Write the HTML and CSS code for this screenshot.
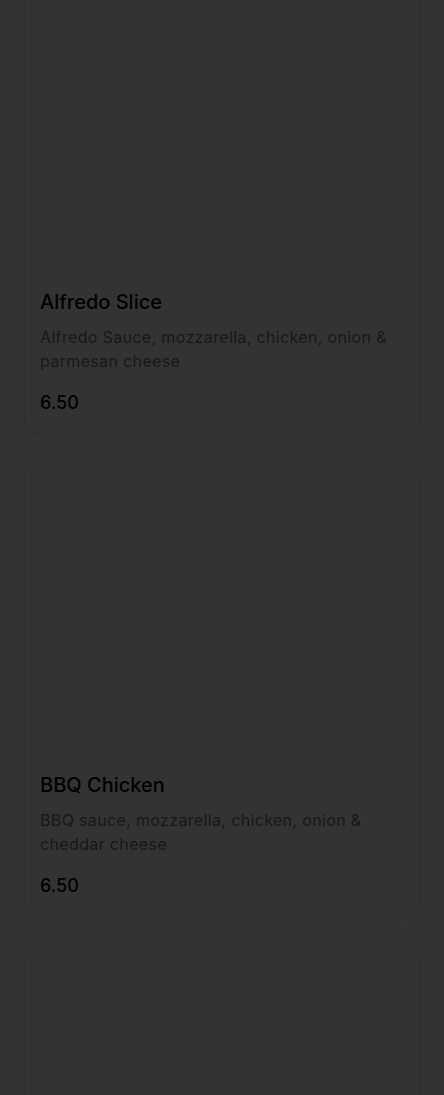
FILE: index.html
```html
<!DOCTYPE html>
<html lang="en">
  <head>
    <meta charset="UTF-8" />
    <meta name="viewport" content="width=device-width, initial-scale=1.0" />
    <title>Menu</title>
    <link rel="stylesheet" href="styles.css">
  </head>
  <body>
    <div class="menu">
      <div class="item-card">
        <div class="item-image"></div>
        <div class="item-info">
          <h3 class="item-name">Alfredo Slice</h3>
          <p class="item-desc">Alfredo Sauce, mozzarella, chicken, onion &amp; parmesan cheese</p>
          <span class="item-price">6.50</span>
        </div>
      </div>
      <div class="item-card">
        <div class="item-image"></div>
        <div class="item-info">
          <h3 class="item-name">BBQ Chicken</h3>
          <p class="item-desc">BBQ sauce, mozzarella, chicken, onion &amp; cheddar cheese</p>
          <span class="item-price">6.50</span>
        </div>
      </div>
      <div class="item-card">
        <div class="item-image"></div>
        <div class="item-info">
          <h3 class="item-name">Buffalo Chicken</h3>
          <p class="item-desc">Buffalo sauce, mozzarella, chicken &amp; ranch</p>
          <span class="item-price">6.50</span>
        </div>
      </div>
    </div>
    <!-- modal backdrop over the menu -->
    <div class="backdrop"></div>
  </body>
</html>
```

FILE: styles.css
```css
body {
  margin: 0;
  background: #fff;
  font-family: Inter, "Open Sans", sans-serif;
  color: #000;
}

.menu {
  display: flex;
  flex-direction: column;
  gap: 24px;
  padding: 0 24px 24px;
  margin-top: -26px;
}

.item-card {
  background: #fff;
  border: 1px solid #e8e8e8;
  border-radius: 16px;
  box-shadow: 0 2px 8px rgba(0, 0, 0, 0.06);
  overflow: hidden;
}

.item-image {
  aspect-ratio: 4 / 3;
  background: #fff;
}

.item-info {
  padding: 17px 15px 16px;
}

.item-name {
  margin: 0;
  font-size: 20px;
  line-height: 28px;
  font-weight: 500;
}

.item-desc {
  margin: 9px 0 0;
  font-size: 16px;
  line-height: 24px;
  letter-spacing: 0.35px;
  color: #777;
}

.item-price {
  display: block;
  margin-top: 16px;
  font-size: 18px;
  line-height: 28px;
  font-weight: 500;
}

.backdrop {
  position: fixed;
  inset: 0;
  background: rgba(0, 0, 0, 0.8);
}
```
